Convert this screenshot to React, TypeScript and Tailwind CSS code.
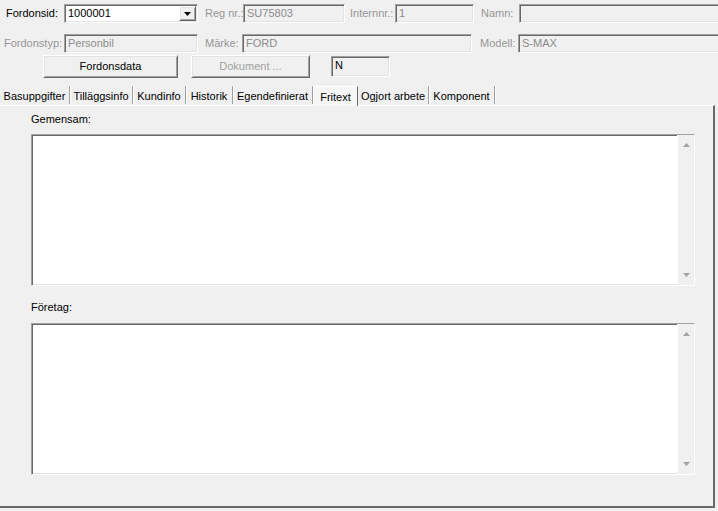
import React from 'react';

const sunken =
  'border border-t-[#a0a0a0] border-l-[#a0a0a0] border-b-white border-r-white shadow-[inset_1px_1px_0_#696969,inset_-1px_-1px_0_#e3e3e3]';
const raised =
  'border border-t-white border-l-white border-b-[#696969] border-r-[#696969] shadow-[inset_1px_1px_0_#e3e3e3,inset_-1px_-1px_0_#a0a0a0]';

const tabs = [
  { label: 'Basuppgifter', w: 'w-[70px]' },
  { label: 'Tilläggsinfo', w: 'w-[63px]' },
  { label: 'Kundinfo', w: 'w-[53px]' },
  { label: 'Historik', w: 'w-[47px]' },
  { label: 'Egendefinierat', w: 'w-[80px]' },
  { label: 'Fritext', w: 'w-[45px]', active: true },
  { label: 'Ogjort arbete', w: 'w-[71px]' },
  { label: 'Komponent', w: 'w-[66px]' },
];

function Field({ value, className }: { value: string; className: string }) {
  return (
    <div className={`${sunken} ${className} shrink-0 h-full bg-[#f0f0f0] pl-[3px] leading-[17px] text-[#8c8c8c] whitespace-nowrap overflow-hidden`}>
      {value}
    </div>
  );
}

function Label({ text, className, dim }: { text: string; className: string; dim?: boolean }) {
  return (
    <span className={`${className} shrink-0 whitespace-nowrap leading-[19px] ${dim ? 'text-[#969696]' : 'text-black'}`}>{text}</span>
  );
}

function Arrow({ up }: { up?: boolean }) {
  return (
    <svg width="7" height="4" viewBox="0 0 7 4" className="block">
      <path d={up ? 'M3.5 0 L7 4 L0 4 Z' : 'M0 0 L7 0 L3.5 4 Z'} fill="#a3a3a3" />
    </svg>
  );
}

function Memo() {
  return (
    <div className={`${sunken} ml-[31px] w-[664px] h-[152px] bg-white flex justify-end`}>
      <div className="w-[17px] h-full bg-[#f0f0f0] border-l border-white flex flex-col items-center justify-between py-[8px]">
        <Arrow up />
        <Arrow />
      </div>
    </div>
  );
}

export default function App() {
  return (
    <div className="w-[718px] h-[511px] overflow-hidden bg-[#f0f0f0] pt-[4px] font-['Liberation_Sans',Arial,sans-serif] text-[11px]">
      {/* row 1 */}
      <div className="flex h-[19px]">
        <Label text="Fordonsid:" className="ml-[6px] w-[58px]" />
        <div className={`${sunken} shrink-0 w-[134px] h-full bg-white flex items-center justify-between`}>
          <span className="pl-[3px] text-black leading-[17px]">1000001</span>
          <div className={`${raised} w-[17px] h-[15px] mr-[1px] bg-[#f0f0f0] flex items-center justify-center`}>
            <svg width="7" height="4" viewBox="0 0 7 4">
              <path d="M0 0 L7 0 L3.5 4 Z" fill="#000" />
            </svg>
          </div>
        </div>
        <Label text="Reg nr.:" dim className="ml-[7px] w-[38px]" />
        <Field value="SU75803" className="w-[102px]" />
        <Label text="Internnr.:" dim className="ml-[5px] w-[45px]" />
        <Field value="1" className="w-[79px]" />
        <Label text="Namn:" dim className="ml-[7px] w-[38px]" />
        <Field value="" className="w-[210px]" />
      </div>

      {/* row 2 */}
      <div className="flex h-[19px] mt-[11px]">
        <Label text="Fordonstyp:" dim className="ml-[4px] w-[60px]" />
        <Field value="Personbil" className="w-[134px]" />
        <Label text="Märke:" dim className="ml-[7px] w-[37px]" />
        <Field value="FORD" className="w-[230px]" />
        <Label text="Modell:" dim className="ml-[8px] w-[38px]" />
        <Field value="S-MAX" className="w-[210px]" />
      </div>

      {/* row 3 */}
      <div className="flex h-[23px] mt-[2px]">
        <div className={`${raised} shrink-0 ml-[43px] w-[135px] h-full flex items-center justify-center text-black`}>Fordonsdata</div>
        <div className={`${raised} shrink-0 ml-[13px] w-[119px] h-full flex items-center justify-center text-[#a0a0a0]`}>Dokument ...</div>
        <div className={`${sunken} shrink-0 ml-[21px] mt-[1px] w-[59px] h-[21px] pl-[3px] leading-[17px] text-black`}>N</div>
      </div>

      {/* tabs */}
      <div className="flex items-end h-[20px] mt-[7px]">
        {tabs.map((t) =>
          t.active ? (
            <div
              key={t.label}
              className={`${t.w} shrink-0 h-[20px] -mb-[1px] relative z-10 bg-[#f6f6f6] border-t border-l border-white border-r border-r-[#696969] flex justify-center pt-[3px] leading-[14px] text-black`}
            >
              {t.label}
            </div>
          ) : (
            <div
              key={t.label}
              className={`${t.w} shrink-0 h-[18px] mb-[1px] flex justify-center pt-[3px] leading-[14px] text-black border-r border-[#a0a0a0] shadow-[1px_0_0_#fff]`}
            >
              {t.label}
            </div>
          ),
        )}
      </div>

      {/* tab panel */}
      <div className="w-[715px] h-[403px] border-t border-white border-r-2 border-b-2 border-r-[#696969] border-b-[#696969]">
        <div className="mt-[7px] ml-[31px] leading-[13px] text-black">Gemensam:</div>
        <div className="mt-[8px]">
          <Memo />
        </div>
        <div className="mt-[15px] ml-[31px] leading-[13px] text-black">Företag:</div>
        <div className="mt-[9px]">
          <Memo />
        </div>
      </div>
    </div>
  );
}
